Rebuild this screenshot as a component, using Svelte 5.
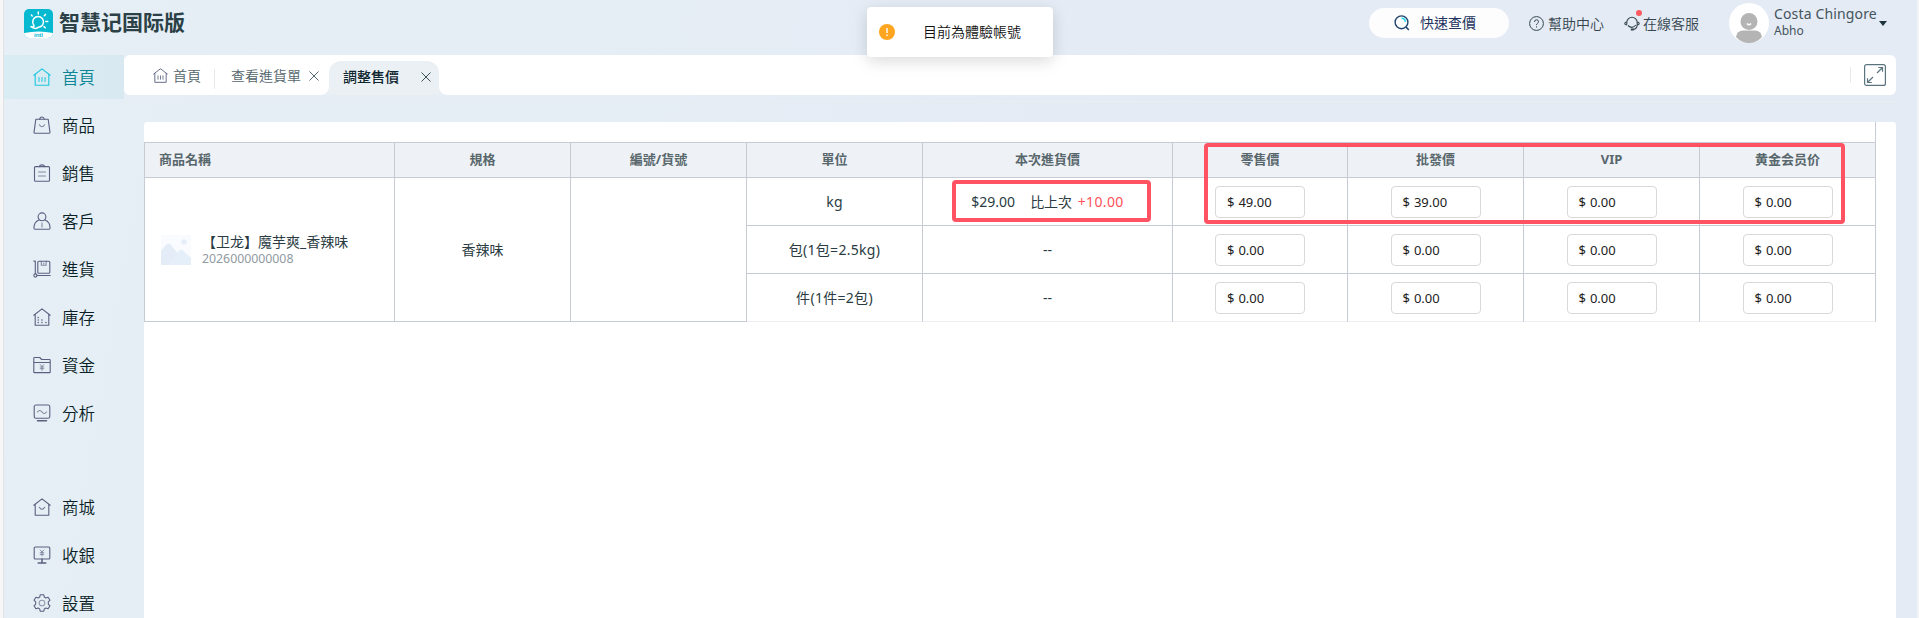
<script lang="ts">
	const mainNav = [
		{ icon: 'home', label: '首頁', active: true },
		{ icon: 'bag', label: '商品' },
		{ icon: 'clipboard', label: '銷售' },
		{ icon: 'customer', label: '客戶' },
		{ icon: 'trolley', label: '進貨' },
		{ icon: 'stock', label: '庫存' },
		{ icon: 'folder', label: '資金' },
		{ icon: 'chart', label: '分析' }
	];
	const subNav = [
		{ icon: 'mall', label: '商城' },
		{ icon: 'cashier', label: '收銀' },
		{ icon: 'gear', label: '設置' }
	];

	const levels = ['零售價', '批發價', 'VIP', '黄金会员价'];

	let units = $state([
		{ name: 'kg', cost: '$29.00', diff: '+10.00', prices: ['49.00', '39.00', '0.00', '0.00'] },
		{ name: '包(1包=2.5kg)', cost: '--', diff: '', prices: ['0.00', '0.00', '0.00', '0.00'] },
		{ name: '件(1件=2包)', cost: '--', diff: '', prices: ['0.00', '0.00', '0.00', '0.00'] }
	]);
</script>

{#snippet icon(name: string)}
	<svg class="icon" viewBox="0 0 18 18" fill="none" stroke="currentColor" stroke-width="1.1" stroke-linejoin="round" stroke-linecap="round">
		{#if name === 'home'}
			<path d="M.8 7.2 9 .9l8.200 6.300M2.200 6.500v10.700h13.600V6.500" />
			<path d="M6 9.500v4M9 9.500v4M12 9.500v4" stroke-width="1" />
		{:else if name === 'bag'}
			<path d="M2.800 3.300h12.400l1.800 13q.1.900-.8.900H1.800q-.9 0-.8-.9z" />
			<path d="M6.700 3.200Q7 1 9 1t2.300 2.200" />
			<path d="M6.300 8.800q2.700 4 5.400 0" opacity=".7" />
		{:else if name === 'clipboard'}
			<rect x="1.500" y="2.600" width="15" height="14.700" rx="1" />
			<path d="M6.300 2.600Q6.700.9 9 .9t2.700 1.700" />
			<path d="M5.500 8h7M5.500 12h7" opacity=".7" />
		{:else if name === 'customer'}
			<circle cx="9" cy="4.800" r="3.900" />
			<path d="M6 8C2.800 9.300.9 12.200.9 16q0 1.200 1.200 1.200h13.800q1.200 0 1.200-1.200C17.100 12.200 15.200 9.300 12 8" />
			<path d="M9 11v4" opacity=".7" />
		{:else if name === 'trolley'}
			<path d="M.8 1.100h1.500v12.500M4 15.500h13.200" />
			<circle cx="2.400" cy="15.500" r="1.600" />
			<rect x="4.800" y="1.200" width="12" height="12" rx="1" />
			<path d="M8.300 1.200v4h4.800v-4M10.700 4V3" opacity=".7" />
		{:else if name === 'stock'}
			<path d="M.8 7.200 9 .9l8.200 6.300M2.200 6.500v10.700h13.600V6.500" />
			<path d="M5.100 9.500h.3M5.100 12h.3M5.100 14.500h.3M8.800 12h.3M8.800 14.500h.3M12.800 14.500h.3" stroke-width="1.600" opacity=".8" />
		{:else if name === 'folder'}
			<path d="M.8 15.900V2.200q0-.7.700-.7h5.200l2 2h7.800q.7 0 .7.700v11.700q0 .7-.7.700h-15q-.7 0-.7-.7zM.8 6.500h16.400" />
			<path d="m7.200 8.500 1.800 2 1.800-2M9 10.500v4M7.200 11h3.600M7.200 12.700h3.600" stroke-width=".9" opacity=".7" />
		{:else if name === 'chart'}
			<rect x="1.200" y="1" width="15.600" height="13.200" rx="1.800" />
			<path d="M4.500 8q2.200-3 4.500 0t4.500 0" opacity=".75" />
			<path d="M4.500 16.800h9" stroke-width="1.500" />
		{:else if name === 'mall'}
			<path d="M.8 7.200 9 .9l8.200 6.300M2.200 6.500v10.700h13.600V6.500" />
			<path d="M6.300 9.300q2.700 4 5.400 0" opacity=".8" />
		{:else if name === 'cashier'}
			<rect x="1.200" y="1" width="15.600" height="12" rx="1" />
			<path d="M9 13v4M5.200 17h7.600" stroke-width="1.500" />
			<path d="m7.200 4 1.800 2 1.800-2M9 6v4M7.200 6.700h3.600M7.200 8.400h3.600" stroke-width=".9" opacity=".7" />
		{:else if name === 'gear'}
			<path d="M7.200.8h3.600l.5 2.300 1.600.9 2.200-.8 1.900 3-1.700 1.700v2.200l1.700 1.700-1.900 3-2.200-.8-1.600.9-.5 2.300H7.200l-.5-2.300-1.600-.9-2.200.8-1.900-3 1.700-1.700V7.900L1 6.200l1.900-3 2.200.8 1.600-.9z" />
			<circle cx="9" cy="9" r="2.800" opacity=".6" />
		{/if}
	</svg>
{/snippet}

{#snippet close()}
	<svg class="close" viewBox="0 0 10 10" stroke="currentColor"><path d="m.5.5 9 9M9.500.5l-9 9" /></svg>
{/snippet}

{#snippet navItem(item: { icon: string; label: string; active?: boolean })}
	<a class="nav-item" class:active={item.active} href="#{item.icon}">
		{@render icon(item.icon)}
		<span>{item.label}</span>
	</a>
{/snippet}

<div class="app">
	<header>
		<div class="brand">
			<svg class="logo" viewBox="0 0 29 29">
				<rect width="29" height="29" rx="5" fill="#06b9d1" />
				<path d="M0 24q14.500-3 29 0a5 5 0 0 1-5 5H5a5 5 0 0 1-5-5z" fill="#fff" />
				<g fill="none" stroke="#fff" stroke-width="1.500" stroke-linecap="round">
					<path d="M9.800 16.200a5.400 5.400 0 1 1 4.400 2.100q-3.200 2.600-7.700-.8l2.600.4q1.200 0 .7-1.700z" />
					<path d="M14.300 3v2M20.300 6.800l1.200-1.400M21.800 12.500h2M20 17.600l1.200 1.200M8.200 7 7.400 6.100" />
				</g>
				<text x="14.500" y="28" text-anchor="middle">intl</text>
			</svg>
			<h1>智慧记国际版</h1>
		</div>

		<div class="tools">
			<button class="quick">
				<svg width="16" height="16" viewBox="0 0 16 16" fill="none">
					<circle cx="7.500" cy="7.300" r="6.400" stroke="#20456e" stroke-width="1.400" />
					<path d="m12 12 2.800 3" stroke="#20456e" stroke-width="1.600" />
					<path d="M7.500 3.300q3.500 0 3.900 3.500" stroke="#25d4ee" stroke-width="1.500" />
				</svg>
				快速查價
			</button>
			<a class="tool help" href="#help">
				<svg width="15" height="15" viewBox="0 0 15 15" fill="none" stroke="currentColor">
					<circle cx="7.500" cy="7.500" r="6.900" />
					<path d="M5.500 6q0-2.200 2-2.200t2 1.900q0 1-1 1.600t-1 1.700M7.500 10.300v1.200" />
				</svg>
				幫助中心
			</a>
			<a class="tool service" href="#service">
				<svg width="16" height="15" viewBox="0 0 16 15" fill="none" stroke="currentColor" stroke-width="1.100">
					<path d="M2.800 8.800V6.500a5.200 5.200 0 0 1 10.400 0v2.300M2.800 6Q.8 6 .8 7.500t2 1.500M13.200 6q2 0 2 1.500t-2 1.500q0 4.300-5 4.500" />
					<path d="M4 9.500q4 4 8-.5" />
					<path d="M6.800 13.500h3" stroke-width="2" />
				</svg>
				在線客服
				<i class="dot"></i>
			</a>
			<div class="user">
				<svg class="avatar" viewBox="0 0 40 40">
					<circle cx="20" cy="20" r="20" fill="#fff" />
					<circle cx="20" cy="18.500" r="8.500" fill="#b4b4b4" />
					<path d="M7 34q1-6.500 7-6.500h12q6 0 7 6.500-5.500 6-13 6T7 34z" fill="#b4b4b4" />
					<path d="M18 20.500q2 2.700 4 0" fill="none" stroke="#fff" stroke-width="1.500" />
				</svg>
				<div class="who">
					<span class="name">Costa Chingore</span>
					<span class="shop">Abho</span>
				</div>
				<i class="caret"></i>
			</div>
		</div>
	</header>

	<div class="body">
		<nav class="sidebar">
			{#each mainNav as item}
				{@render navItem(item)}
			{/each}
			<div class="spacer"></div>
			{#each subNav as item}
				{@render navItem(item)}
			{/each}
		</nav>

		<main>
			<div class="tabs">
				<a class="tab tab-home" href="#home">{@render icon('home')}首頁</a>
				<a class="tab tab-order" href="#order">查看進貨單{@render close()}</a>
				<a class="tab tab-active" href="#price">調整售價{@render close()}</a>
				<button class="fullscreen" aria-label="fullscreen">
					<svg width="22" height="22" viewBox="0 0 22 22" fill="none" stroke="currentColor" stroke-width="1.200">
						<rect x=".6" y=".6" width="20.800" height="20.800" rx="2" />
						<path d="m13 9 5.500-5.500M14.200 3.500h4.300v4.300M9 13l-5.500 5.500M3.500 14.200v4.300h4.300" />
					</svg>
				</button>
			</div>

			<section class="panel">
				<div class="table-wrap">
					<table>
						<colgroup>
							<col class="w-name" /><col class="w" /><col class="w" /><col class="w" />
							<col class="w-cost" /><col class="w-first" /><col class="w" /><col class="w" /><col class="w" />
						</colgroup>
						<thead>
							<tr>
								<th class="left">商品名稱</th>
								<th>規格</th>
								<th>編號/貨號</th>
								<th>單位</th>
								<th>本次進貨價</th>
								{#each levels as level}
									<th>{level}</th>
								{/each}
							</tr>
						</thead>
						<tbody>
							{#each units as unit, i}
								<tr>
									{#if i === 0}
										<td rowspan="3">
											<div class="product">
												<svg class="thumb" viewBox="0 0 30 30">
													<rect width="30" height="30" fill="#fafbfe" />
													<circle cx="23" cy="7" r="2.700" fill="#e6eef9" />
													<path d="M0 16 5 10q2.500-2.500 5 0l8 10v10H0z" fill="#e3ecf7" />
													<path d="m7 30 10.500-14q2.500-2.500 5 0l7.500 7v7z" fill="#e4eff9" />
												</svg>
												<div>
													<p class="title">【卫龙】魔芋爽_香辣味</p>
													<p class="code">2026000000008</p>
												</div>
											</div>
										</td>
										<td rowspan="3">香辣味</td>
										<td rowspan="3"></td>
									{/if}
									<td class="unit">{unit.name}</td>
									<td>
										{#if unit.diff}
											<span class="cost">{unit.cost}</span>比上次 <span class="up">{unit.diff}</span>
										{:else}
											{unit.cost}
										{/if}
									</td>
									{#each unit.prices as _, p}
										<td>
											<label class="price">$ <input bind:value={unit.prices[p]} /></label>
										</td>
									{/each}
								</tr>
							{/each}
						</tbody>
					</table>
					<div class="mark mark-cost"></div>
					<div class="mark mark-prices"></div>
				</div>
			</section>
		</main>
	</div>

	<div class="toast" role="status">
		<svg width="16" height="16" viewBox="0 0 16 16">
			<circle cx="8" cy="8" r="8" fill="#ffa51f" />
			<path d="M8 4v5M8 10.500v1.500" stroke="#fff" stroke-width="1.400" />
		</svg>
		<span>目前為體驗帳號</span>
	</div>
</div>

<style>
	:global(body) {
		overflow: hidden;
	}

	.app {
		position: relative;
		box-sizing: border-box;
		width: 1919px;
		height: 618px;
		overflow: hidden;
		display: flex;
		flex-direction: column;
		border-left: 3px solid #f7f7f7;
		border-right: 2px solid #f2f3f5;
		background: linear-gradient(100deg, #e6eff5, #e4ebf5 60%);
		box-shadow: inset 1px 0 #e3e3e5;
		font: 14px/20px 'Noto Sans', 'Noto Sans CJK TC', sans-serif;
		color: #2a3b42;
	}

	a {
		color: inherit;
		text-decoration: none;
	}

	button {
		border: 0;
		padding: 0;
		background: none;
		font: inherit;
		color: inherit;
	}

	p,
	h1 {
		margin: 0;
	}

	header {
		flex: none;
		height: 55px;
		display: flex;
		justify-content: space-between;
	}

	.brand {
		display: flex;
		height: 47px;
		align-items: center;
		gap: 6px;
		padding-left: 21px;
	}

	.logo {
		width: 29px;
		height: 29px;
	}

	.logo text {
		font: bold 6px 'Liberation Sans', sans-serif;
		fill: #06b9d1;
	}

	h1 {
		font: bold 21px/30px 'Noto Sans CJK SC', sans-serif;
		color: #2b4047;
		margin-top: -5px;
	}

	.tools {
		display: flex;
		align-items: flex-start;
		padding-right: 30px;
	}

	.quick {
		display: flex;
		align-items: center;
		gap: 10px;
		width: 140px;
		height: 30px;
		margin-top: 8px;
		padding-left: 25px;
		border-radius: 15px;
		background: #fdfdfe;
		color: #23335f;
		white-space: nowrap;
	}

	.tool {
		position: relative;
		display: flex;
		align-items: center;
		gap: 4px;
		height: 30px;
		margin: 8px 0 0 20px;
		color: #35464f;
		font-family: 'Noto Sans CJK TC', sans-serif;
		font-weight: 350;
		line-height: 18px;
	}

	.service {
		gap: 3px;
	}

	.dot {
		position: absolute;
		left: 12px;
		top: 2px;
		width: 6px;
		height: 6px;
		border-radius: 50%;
		background: #ff5a5f;
	}

	.user {
		display: flex;
		align-items: center;
		height: 40px;
		margin: 3px 0 0 30px;
	}

	.avatar {
		width: 40px;
		height: 40px;
	}

	.who {
		display: flex;
		flex-direction: column;
		width: 107px;
		margin-top: -4px;
		padding-left: 5px;
		box-sizing: border-box;
		white-space: nowrap;
		color: #44545c;
	}

	.name {
		font-size: 14px;
		line-height: 19px;
		letter-spacing: 0.15px;
	}

	.shop {
		font-size: 12px;
		line-height: 16px;
	}

	.caret {
		margin: 1px 0 0 3px;
		border: 4px solid transparent;
		border-top: 5px solid #1f343c;
		border-bottom: 0;
	}

	.body {
		flex: 1;
		min-height: 0;
		display: flex;
	}

	.sidebar {
		flex: none;
		width: 121px;
		display: flex;
		flex-direction: column;
		gap: 4px;
	}

	.spacer {
		flex: none;
		height: 42px;
	}

	.nav-item {
		flex: none;
		display: flex;
		align-items: center;
		gap: 11px;
		height: 44px;
		margin-left: 1px;
		padding-left: 29px;
		font-family: 'Noto Sans CJK TC', sans-serif;
		font-size: 16.5px;
		font-weight: 350;
		color: #0b1f27;
	}

	.nav-item span {
		padding-bottom: 1px;
	}

	.nav-item .icon {
		color: #5a6080;
	}

	.nav-item.active {
		background: linear-gradient(90deg, #d8ecf3, #d9e9f2);
		color: #0c8595;
	}

	.nav-item.active .icon {
		color: #1cc7dc;
	}

	.icon {
		flex: none;
		width: 18px;
		height: 18px;
	}

	main {
		flex: none;
		width: 1772px;
		display: flex;
		flex-direction: column;
	}

	.tabs {
		flex: none;
		display: flex;
		align-items: flex-end;
		height: 40px;
		border-radius: 6px;
		background: #fff;
		color: #55666d;
	}

	.tab {
		display: flex;
		align-items: center;
		height: 34px;
		font-family: 'Noto Sans CJK TC', sans-serif;
		font-weight: 350;
	}

	.tab-home {
		box-sizing: border-box;
		width: 91px;
		height: 20px;
		margin-bottom: 6px;
		padding: 0 0 8px 29px;
		gap: 5px;
		border-right: 1px solid #e6e9ec;
	}

	.tab-home .icon {
		width: 15px;
		height: 15px;
		color: #5a6080;
	}

	.tab-order {
		width: 98px;
		padding: 0 0 1px 16px;
		gap: 8px;
		height: 38px;
	}

	.close {
		width: 10px;
		height: 10px;
		margin-top: 1px;
	}

	.tab-active {
		position: relative;
		box-sizing: border-box;
		width: 110px;
		padding: 0 8px 5px 14px;
		justify-content: space-between;
		border-radius: 12px 12px 0 0;
		background: #ebf0f5;
		color: #0f262f;
		font-weight: 500;
	}

	.tab-active .close {
		margin-top: 3px;
		stroke: #3d4f57;
	}

	/* flared feet of the active tab */
	.tab-active::before,
	.tab-active::after {
		content: '';
		position: absolute;
		bottom: 0;
		width: 8px;
		height: 8px;
	}

	.tab-active::before {
		left: -8px;
		background: radial-gradient(circle at 0 0, transparent 7.5px, #ebf0f5 8px);
	}

	.tab-active::after {
		right: -8px;
		background: radial-gradient(circle at 100% 0, transparent 7.5px, #ebf0f5 8px);
	}

	.fullscreen {
		display: flex;
		align-items: center;
		height: 16px;
		margin: 0 10px 12px auto;
		padding-left: 13px;
		border-left: 1px solid #e9ecef;
		color: #5c7480;
	}

	.panel {
		flex: 1;
		margin: 6px 0 0;
		padding: 20px 0 0 20px;
		border-top: 1px solid #ebeef1;
	}

	.table-wrap {
		position: relative;
		box-sizing: border-box;
		height: 510px;
		padding-top: 20px;
		border-radius: 3px;
		background: linear-gradient(#c7cbd3, #c7cbd3) 1731px 0 / 1px 20px no-repeat #fff;
	}

	table {
		width: 1732px;
		table-layout: fixed;
		border-collapse: separate;
		border-spacing: 0;
		border-left: 1px solid #c7cbd3;
	}

	.w-name,
	.w-cost {
		width: 250px;
	}

	.w {
		width: 176px;
	}

	.w-first {
		width: 175px;
	}

	th,
	td {
		box-sizing: border-box;
		height: 48px;
		padding: 0;
		border: solid #c7cbd3;
		border-width: 0 1px 1px 0;
		text-align: center;
		line-height: 20px;
	}

	th {
		height: 36px;
		padding-bottom: 3px;
		border-top-width: 1px;
		background: #eef1f6;
		font-size: 13px;
		font-weight: bold;
		color: #58676c;
	}

	.left {
		padding-left: 14px;
		text-align: left;
	}

	tr:last-child td {
		border-bottom-color: #ebedf0;
	}

	.product {
		display: flex;
		align-items: center;
		gap: 11px;
		padding-left: 16px;
		text-align: left;
	}

	.thumb {
		width: 30px;
		height: 30px;
	}

	.title {
		margin-top: -1px;
		line-height: 18px;
	}

	.code {
		font-size: 12.300px;
		line-height: 15px;
		color: #909a9f;
	}

	.unit {
		letter-spacing: 0.3px;
	}

	.cost {
		margin-right: 15px;
	}

	.up {
		margin-left: 2px;
		letter-spacing: 0.35px;
		color: #ff5157;
	}

	.price {
		box-sizing: border-box;
		display: flex;
		align-items: center;
		gap: 4px;
		width: 90px;
		height: 32px;
		margin: 0 auto;
		padding-left: 11px;
		border: 1px solid #d9d9d9;
		border-radius: 4px;
		font-size: 13px;
		color: #222;
	}

	.price input {
		width: 60px;
		padding: 0;
		border: 0;
		outline: 0;
		background: none;
		font: inherit;
		color: inherit;
	}

	.mark {
		position: absolute;
		box-sizing: border-box;
		border: 4px solid #ff5263;
		border-radius: 4px;
		pointer-events: none;
	}

	.mark-cost {
		left: 808px;
		top: 58px;
		width: 199px;
		height: 42px;
	}

	.mark-prices {
		left: 1060px;
		top: 21px;
		width: 641px;
		height: 81px;
	}

	.toast {
		position: absolute;
		left: 864px;
		top: 7px;
		box-sizing: border-box;
		display: flex;
		align-items: center;
		gap: 28px;
		width: 186px;
		height: 50px;
		padding-left: 12px;
		border-radius: 4px;
		background: #fff;
		box-shadow: 0 4px 16px rgba(0, 0, 0, 0.15);
		font-family: 'Noto Sans CJK TC', sans-serif;
		font-weight: 350;
		color: #111;
	}

	.toast span {
		padding-bottom: 2px;
	}
</style>
